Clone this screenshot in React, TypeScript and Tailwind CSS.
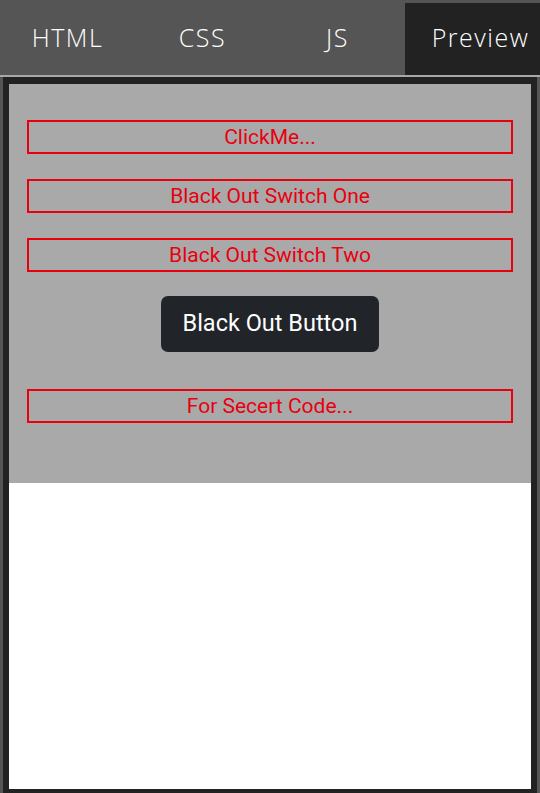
import React from 'react';

const tabs = ['HTML', 'CSS', 'JS', 'Preview'];

const RedBox = ({ children }: { children: React.ReactNode }) => (
  <div className="h-[34px] border-2 border-[#e8000f] flex items-center justify-center text-[21px] text-[#e8000f] leading-none">
    {children}
  </div>
);

export default function App() {
  return (
    <div className="w-[540px] h-[793px] bg-[#555555] flex flex-col overflow-hidden" style={{ fontFamily: 'Roboto, sans-serif' }}>
      <div className="h-[75px] flex shrink-0">
        {tabs.map((t) => (
          <div
            key={t}
            className={`w-[135px] flex items-center justify-center text-[25px] font-light tracking-[0.06em] text-white ${t === 'Preview' ? 'bg-[#222222] mt-[3px] pl-[16px] pb-[2px]' : 'pt-[1px]'}`}
            style={{ fontFamily: '"Open Sans", Lato, sans-serif' }}
          >
            {t}
          </div>
        ))}
      </div>
      <div className="h-[2px] bg-[#a8a8a8] shrink-0" />
      <div className="flex-1 ml-[3px] mr-[3px] border-x-[6px] border-t-[7px] border-b-[4px] border-[#222222] bg-white flex flex-col">
        <div className="h-[399px] bg-[#a9a9a9] px-[18px] pt-[36px] flex flex-col">
          <RedBox>ClickMe...</RedBox>
          <div className="h-[25px]" />
          <RedBox>Black Out Switch One</RedBox>
          <div className="h-[25px]" />
          <RedBox>Black Out Switch Two</RedBox>
          <div className="flex justify-center mt-[24px]">
            <button className="w-[218px] h-[56px] rounded-[7px] bg-[#212529] text-white text-[23.5px]">
              Black Out Button
            </button>
          </div>
          <div className="h-[37px]" />
          <RedBox>For Secert Code...</RedBox>
        </div>
      </div>
    </div>
  );
}
